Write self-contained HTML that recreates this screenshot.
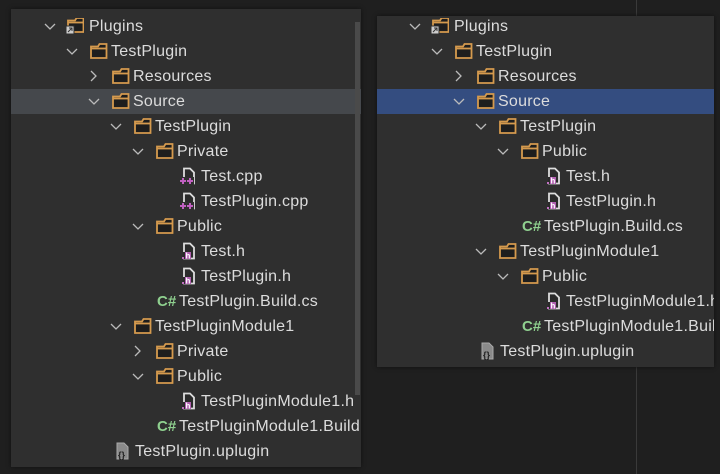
<!DOCTYPE html><html><head><style>
body{margin:0;width:720px;height:474px;background:#1f1f1f;position:relative;overflow:hidden;font-family:"Liberation Sans",sans-serif;}
.p{position:absolute;background:#2f2f2f;overflow:hidden;box-shadow:0 0 4px #111;}
.t{position:absolute;color:#dcdcdc;font-size:16px;letter-spacing:0.25px;line-height:20px;white-space:nowrap;}
.s{position:absolute;}
.cs{position:absolute;color:#8fd08f;font-weight:bold;font-size:15px;line-height:20px;}
</style></head><body>
<div style="position:absolute;left:636px;top:0;width:1px;height:474px;background:#3a3a3a"></div>
<div class="p" style="left:11px;top:9px;width:350px;height:458px" id="L"></div>
<div class="p" style="left:377px;top:16px;width:337px;height:351px" id="R"></div>
<svg width="0" height="0" style="position:absolute"><defs>
<g id="fo"><path d="M1 3.5h7l1.5-2.5h7v14h-15.5z" fill="#1e1e1e" stroke="#d59a4e" stroke-width="1.8"/><path d="M1 5.5h15.5" stroke="#d59a4e" stroke-width="1.8"/></g>
<g id="dn"><path d="M1 4l5 5 5-5" fill="none" stroke="#bbb" stroke-width="1.3"/></g>
<g id="rt"><path d="M3 1l5 5-5 5" fill="none" stroke="#bbb" stroke-width="1.3"/></g>
<g id="hf"><path d="M4 1.5h6l4 4v11H4z" fill="#2a2a2a" stroke="#ddd" stroke-width="1.8"/><rect x="3" y="10" width="8" height="7" fill="#2a2a2a"/><rect x="5" y="10" width="6" height="7" fill="#b060b0"/><text x="5.5" y="16.5" font-size="8" fill="#fff" font-family="Liberation Sans" font-weight="bold">h</text><rect x="2" y="15" width="2" height="2" fill="#c070c0"/></g>
<g id="cf"><path d="M4 1.5h6l4 4v11H4z" fill="#2a2a2a" stroke="#ddd" stroke-width="1.8"/><rect x="0" y="10" width="14" height="8" fill="#2f2f2f"/><path d="M0 14h6M3 11v6M7 14h6M10 11v6" stroke="#c060c0" stroke-width="2"/></g>
<g id="uf"><path d="M3 1h7l4 4v12H3z" fill="#8a8a8a" stroke="#aaa"/><text x="4" y="16" font-size="9" fill="#222" font-family="Liberation Sans" font-weight="bold">{}</text></g>
</defs></svg>
<script>
function build(id,ox,oy,rows,selTop,selColor){
 var P=document.getElementById(id),h='';
 if(selTop!=null)h+='<div style="position:absolute;left:0;top:'+(selTop-oy)+'px;width:100%;height:25px;background:'+selColor+'"></div>';
 rows.forEach(function(r){
  var lvl=r[0],txt=r[1],k=r[2],y=r[3]-oy,x=50+22*lvl-ox;
  if(k=='d'||k=='r'||k=='p'){
   h+='<svg class="s" style="left:'+(x-6)+'px;top:'+(y-6)+'px" width="12" height="12"><use href="#'+(k=='r'?'rt':'dn')+'"/></svg>';
   if(k=='p'){h+='<svg class="s" style="left:'+(x+16)+'px;top:'+(y-8)+'px" width="18" height="17"><g transform="translate(1,-1)"><use href="#fo"/></g><rect x="0" y="8" width="8" height="8" fill="#ccc" stroke="#2f2f2f"/><path d="M2 14l4-4M3 10h3v3" stroke="#333" fill="none"/></svg>';}
   else h+='<svg class="s" style="left:'+(x+18)+'px;top:'+(y-8)+'px" width="18" height="16"><use href="#fo"/></svg>';
   h+='<div class="t" style="left:'+(x+39)+'px;top:'+(y-9)+'px">'+txt+'</div>';
  }else{
   var ix=x+20;
   if(k=='c')h+='<div class="cs" style="left:'+(ix-1)+'px;top:'+(y-9)+'px">C#</div>';
   else h+='<svg class="s" style="left:'+ix+'px;top:'+(y-9)+'px" width="16" height="18"><use href="#'+(k=='h'?'hf':k=='x'?'cf':'uf')+'"/></svg>';
   h+='<div class="t" style="left:'+(ix+21)+'px;top:'+(y-9)+'px">'+txt+'</div>';
  }
 });
 P.innerHTML=h;
}
build('L',11,9,[[0,'Plugins','p',26],[1,'TestPlugin','d',51],[2,'Resources','r',76],[2,'Source','d',101],[3,'TestPlugin','d',126],[4,'Private','d',151],[5,'Test.cpp','x',176],[5,'TestPlugin.cpp','x',201],[4,'Public','d',226],[5,'Test.h','h',251],[5,'TestPlugin.h','h',276],[4,'TestPlugin.Build.cs','c',301],[3,'TestPluginModule1','d',326],[4,'Private','r',351],[4,'Public','d',376],[5,'TestPluginModule1.h','h',401],[4,'TestPluginModule1.Build','c',426],[2,'TestPlugin.uplugin','u',451]],89,'#45484c');
document.getElementById('L').innerHTML+='<div style="position:absolute;left:344px;top:13px;width:5px;height:373px;background:#4a4a4a"></div>';
build('R',377-365,16,[[0,'Plugins','p',26],[1,'TestPlugin','d',51],[2,'Resources','r',76],[2,'Source','d',101],[3,'TestPlugin','d',126],[4,'Public','d',151],[5,'Test.h','h',176],[5,'TestPlugin.h','h',201],[4,'TestPlugin.Build.cs','c',226],[3,'TestPluginModule1','d',251],[4,'Public','d',276],[5,'TestPluginModule1.h','h',301],[4,'TestPluginModule1.Build','c',326],[2,'TestPlugin.uplugin','u',351]],89,'#344d80');
</script>
</body></html>
